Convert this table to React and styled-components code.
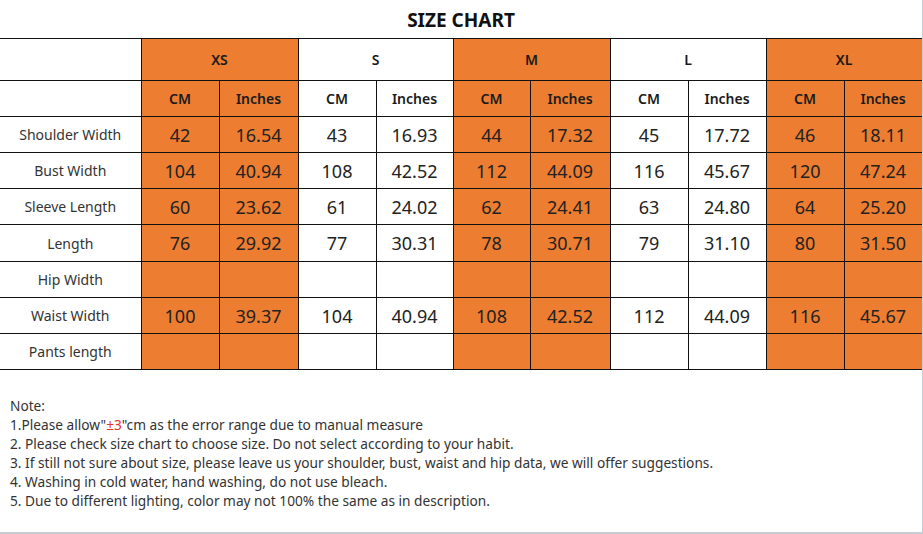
import React from "react"
import styled, { createGlobalStyle } from "styled-components"

const GlobalStyle = createGlobalStyle`
  html, body {
    margin: 0;
    padding: 0;
    background: #fff;
  }
  body {
    font-family: "Noto Sans", "Liberation Sans", sans-serif;
    color: #222;
  }
`

const Page = styled.div`
  width: 922px;
  height: 532px;
  border-right: 1px solid #c8ccd4;
  border-bottom: 2px solid #c8ccd4;
  overflow: hidden;
`

const Title = styled.h2`
  margin: 0;
  height: 38px;
  display: flex;
  align-items: center;
  justify-content: center;
  font-size: 19px;
  font-weight: 700;
  color: #111;
  padding-top: 1px;
  box-sizing: border-box;
`

const Table = styled.table`
  border-collapse: collapse;
  table-layout: fixed;
  width: 922px;

  td {
    border: 1px solid #111;
    padding: 0;
    text-align: center;
    vertical-align: middle;
  }

  td:first-child {
    border-left: none;
  }
`

const Row = styled.tr`
  height: ${(p) => p.h}px;
`

const SizeCell = styled.td`
  background: ${(p) => (p.orange ? "#ed7d31" : "#fff")};
  font-size: 14px;
  font-weight: 600;
  color: #1a1a1a;
`

const UnitCell = styled.td`
  background: ${(p) => (p.orange ? "#ed7d31" : "#fff")};
  font-size: 14px;
  font-weight: 600;
  color: #1a1a1a;
`

const Label = styled.td`
  font-size: 14px;
  color: #333;
`

const Value = styled.td`
  background: ${(p) => (p.orange ? "#ed7d31" : "#fff")};
  font-size: 18px;
  color: #222;
`

const Notes = styled.div`
  padding: 26px 10px 0;
  font-size: 13.7px;
  line-height: 19px;
  color: #333;
`

const NoteLine = styled.div``

const Red = styled.span`
  color: #e5322d;
`

const SIZES = ["XS", "S", "M", "L", "XL"]
const WIDTHS = [141, 78, 79, 78, 77, 77, 80, 78, 78, 78, 78]

const ROWS = [
  { name: "Shoulder Width", h: 36, cm: [42, 43, 44, 45, 46], inch: ["16.54", "16.93", "17.32", "17.72", "18.11"] },
  { name: "Bust Width", h: 36, cm: [104, 108, 112, 116, 120], inch: ["40.94", "42.52", "44.09", "45.67", "47.24"] },
  { name: "Sleeve Length", h: 36, cm: [60, 61, 62, 63, 64], inch: ["23.62", "24.02", "24.41", "24.80", "25.20"] },
  { name: "Length", h: 37, cm: [76, 77, 78, 79, 80], inch: ["29.92", "30.31", "30.71", "31.10", "31.50"] },
  { name: "Hip Width", h: 36, cm: [], inch: [] },
  { name: "Waist Width", h: 36, cm: [100, 104, 108, 112, 116], inch: ["39.37", "40.94", "42.52", "44.09", "45.67"] },
  { name: "Pants length", h: 36, cm: [], inch: [] },
]

const App = () => {
  return (
    <Page>
      <GlobalStyle />
      <Title>SIZE CHART</Title>
      <Table>
        <colgroup>
          {WIDTHS.map((w, i) => (
            <col key={i} style={{ width: w }} />
          ))}
        </colgroup>
        <tbody>
          <Row h={42}>
            <Label />
            {SIZES.map((s, i) => (
              <SizeCell key={s} colSpan={2} orange={i % 2 === 0}>
                {s}
              </SizeCell>
            ))}
          </Row>
          <Row h={36}>
            <Label />
            {SIZES.map((s, i) => (
              <React.Fragment key={s}>
                <UnitCell orange={i % 2 === 0}>CM</UnitCell>
                <UnitCell orange={i % 2 === 0}>Inches</UnitCell>
              </React.Fragment>
            ))}
          </Row>
          {ROWS.map((r) => (
            <Row h={r.h} key={r.name}>
              <Label>{r.name}</Label>
              {SIZES.map((s, i) => (
                <React.Fragment key={s}>
                  <Value orange={i % 2 === 0}>{r.cm[i]}</Value>
                  <Value orange={i % 2 === 0}>{r.inch[i]}</Value>
                </React.Fragment>
              ))}
            </Row>
          ))}
        </tbody>
      </Table>
      <Notes>
        <NoteLine>Note:</NoteLine>
        <NoteLine>
          1.Please allow"<Red>±3</Red>"cm as the error range due to manual measure
        </NoteLine>
        <NoteLine>2. Please check size chart to choose size. Do not select according to your habit.</NoteLine>
        <NoteLine>
          3. If still not sure about size, please leave us your shoulder, bust, waist and hip data, we will offer suggestions.
        </NoteLine>
        <NoteLine>4. Washing in cold water, hand washing, do not use bleach.</NoteLine>
        <NoteLine>5. Due to different lighting, color may not 100% the same as in description.</NoteLine>
      </Notes>
    </Page>
  )
}

export default App
